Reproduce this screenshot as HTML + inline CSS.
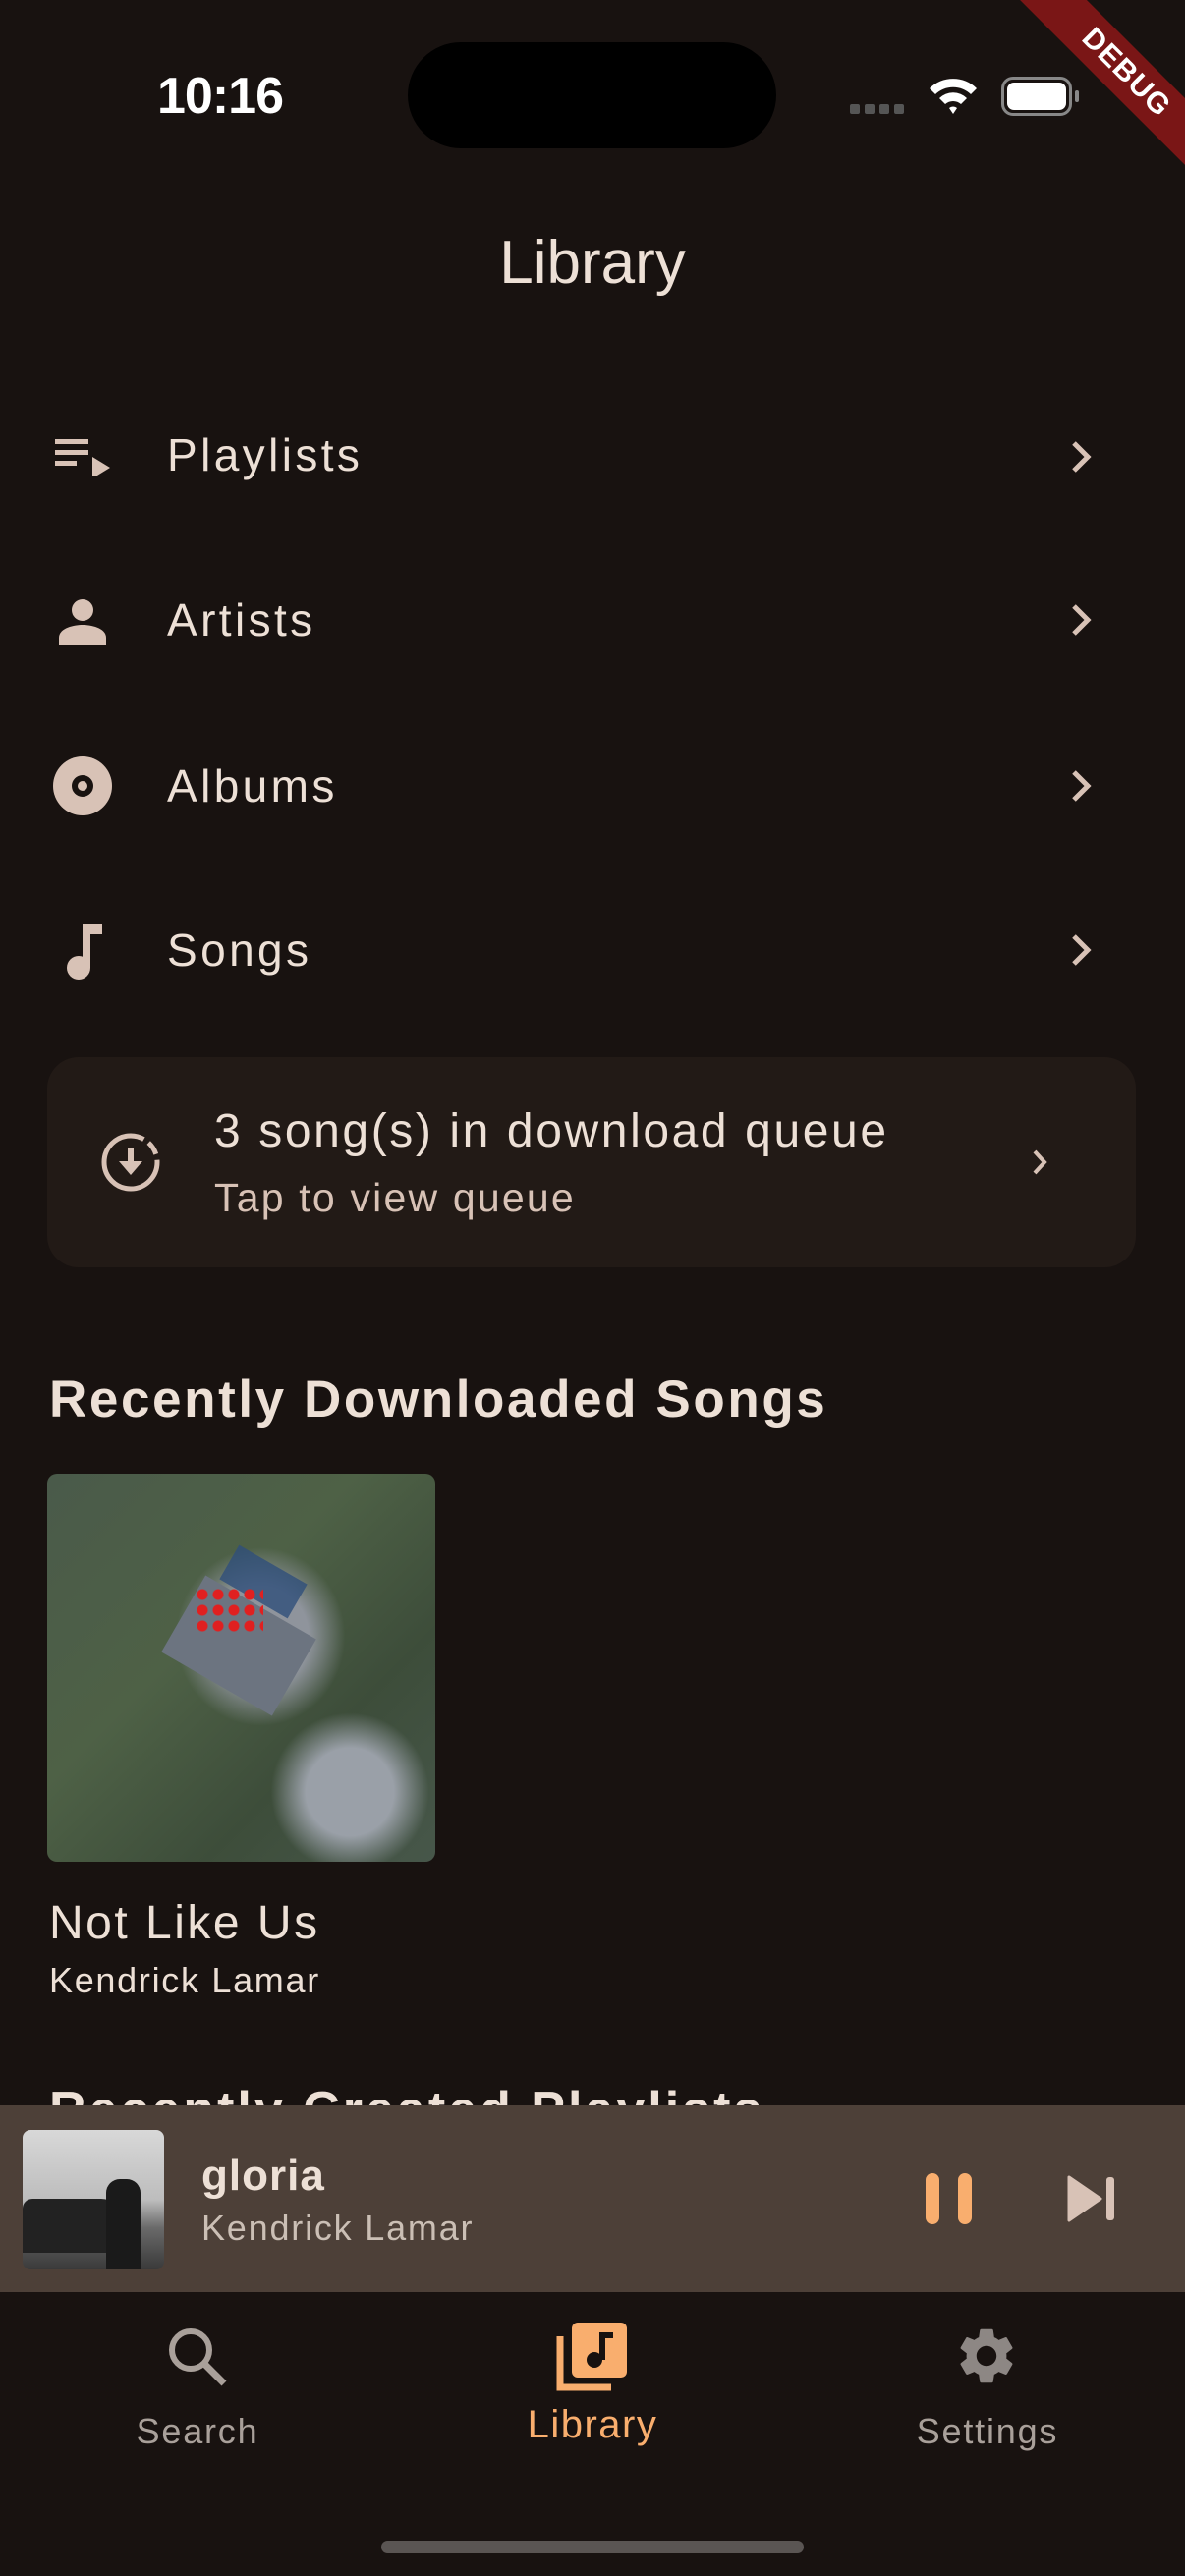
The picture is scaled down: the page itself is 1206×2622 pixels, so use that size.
<!DOCTYPE html>
<html><head><meta charset="utf-8"><style>
*{margin:0;padding:0;box-sizing:border-box}
body{width:1206px;height:2622px;background:#181210;font-family:"Liberation Sans",sans-serif;color:#ede0d6;position:relative;overflow:hidden}
.a{position:absolute}
.row{position:absolute;left:0;width:1206px;height:100px}
.row .t{position:absolute;left:170px;font-size:46px;letter-spacing:3.4px;top:50%;transform:translateY(-50%)}
.row svg{position:absolute}
</style></head><body>
<div class="a" style="left:160px;top:68px;font-size:52px;font-weight:bold;color:#fff;letter-spacing:-1px">10:16</div>
<div class="a" style="left:415px;top:43px;width:375px;height:108px;background:#000;border-radius:54px"></div>
<div class="a" style="left:865px;top:106px;width:58px;height:10px;display:flex;gap:5px"><i style="width:10px;height:10px;background:#555;border-radius:2px"></i><i style="width:10px;height:10px;background:#555;border-radius:2px"></i><i style="width:10px;height:10px;background:#555;border-radius:2px"></i><i style="width:10px;height:10px;background:#555;border-radius:2px"></i></div>
<svg class="a" style="left:944px;top:76px" width="52" height="44" viewBox="0 0 52 44"><path d="M2 14 A34 34 0 0 1 50 14 L44 20 A26 26 0 0 0 8 20Z M12 24 A20 20 0 0 1 40 24 L34 30 A12 12 0 0 0 18 30Z M22 34 A6 6 0 0 1 30 34 L26 40Z" fill="#fff"/></svg>
<div class="a" style="left:1019px;top:78px;width:72px;height:40px;border:3px solid #888;border-radius:12px;padding:3px"><div style="width:100%;height:100%;background:#fff;border-radius:7px"></div></div>
<div class="a" style="left:1094px;top:92px;width:4px;height:12px;background:#888;border-radius:2px"></div>
<div class="a" style="left:976px;top:50px;width:340px;height:48px;background:#7a1616;transform:rotate(45deg);transform-origin:center;color:#fff;font-weight:bold;font-size:30px;text-align:center;line-height:48px;letter-spacing:1px">DEBUG</div>

<div class="a" style="left:0;width:1206px;top:232px;text-align:center;font-size:62px">Library</div>

<div class="row" style="top:413px"><svg style="left:54px;top:32px" width="60" height="40" viewBox="0 0 60 40"><rect x="2" y="2" width="34" height="5" fill="#d8c2b6"/><rect x="2" y="13" width="34" height="5" fill="#d8c2b6"/><rect x="2" y="24" width="22" height="5" fill="#d8c2b6"/><path d="M40 20 L58 31 L40 42Z" fill="#d8c2b6"/></svg><div class="t">Playlists</div><svg style="left:1085px;top:32px" width="30" height="40" viewBox="0 0 30 40"><path d="M8 6 L22 20 L8 34" stroke="#d8c2b6" stroke-width="5" fill="none"/></svg></div>
<div class="row" style="top:581px"><svg style="left:58px;top:26px" width="52" height="52" viewBox="0 0 52 52"><circle cx="26" cy="14" r="11" fill="#d8c2b6"/><path d="M2 50 V42 C2 32 18 29 26 29 C34 29 50 32 50 42 V50Z" fill="#d8c2b6"/></svg><div class="t">Artists</div><svg style="left:1085px;top:30px" width="30" height="40" viewBox="0 0 30 40"><path d="M8 6 L22 20 L8 34" stroke="#d8c2b6" stroke-width="5" fill="none"/></svg></div>
<div class="row" style="top:750px"><svg style="left:54px;top:20px" width="60" height="60" viewBox="0 0 60 60"><circle cx="30" cy="30" r="30" fill="#d8c2b6"/><circle cx="30" cy="30" r="11" fill="#181210"/><circle cx="30" cy="30" r="5" fill="#d8c2b6"/></svg><div class="t">Albums</div><svg style="left:1085px;top:30px" width="30" height="40" viewBox="0 0 30 40"><path d="M8 6 L22 20 L8 34" stroke="#d8c2b6" stroke-width="5" fill="none"/></svg></div>
<div class="row" style="top:917px"><svg style="left:62px;top:22px" width="44" height="60" viewBox="0 0 44 60"><rect x="22" y="2" width="8" height="44" fill="#d8c2b6"/><rect x="22" y="2" width="20" height="10" fill="#d8c2b6"/><circle cx="18" cy="46" r="12" fill="#d8c2b6"/></svg><div class="t">Songs</div><svg style="left:1085px;top:30px" width="30" height="40" viewBox="0 0 30 40"><path d="M8 6 L22 20 L8 34" stroke="#d8c2b6" stroke-width="5" fill="none"/></svg></div>

<div class="a" style="left:48px;top:1076px;width:1108px;height:214px;background:#221a16;border-radius:32px"></div>
<svg class="a" style="left:102px;top:1152px" width="62" height="62" viewBox="0 0 62 62"><path d="M31 4 A27 27 0 0 1 58 31" stroke="#d8c2b6" stroke-width="5" fill="none" stroke-dasharray="14 6"/><path d="M58 31 A27 27 0 1 1 31 4" stroke="#d8c2b6" stroke-width="5" fill="none"/><rect x="28" y="16" width="6" height="18" fill="#d8c2b6"/><path d="M19 30 L43 30 L31 44Z" fill="#d8c2b6"/></svg>
<div class="a" style="left:218px;top:1124px;font-size:48px;letter-spacing:2.6px">3 song(s) in download queue</div>
<div class="a" style="left:218px;top:1196px;font-size:41px;letter-spacing:2.2px;color:#d8c2b6">Tap to view queue</div>
<svg class="a" style="left:1046px;top:1167px" width="24" height="32" viewBox="0 0 24 32"><path d="M7 5 L17 16 L7 27" stroke="#d8c2b6" stroke-width="4" fill="none"/></svg>

<div class="a" style="left:50px;top:1394px;font-size:53px;font-weight:bold;letter-spacing:2.6px">Recently Downloaded Songs</div>
<div class="a" style="left:48px;top:1500px;width:395px;height:395px;border-radius:10px;overflow:hidden;background:radial-gradient(ellipse at 55% 42%,#8f949c 0 16%,transparent 28%),radial-gradient(circle at 78% 82%,#9aa0a8 0 10%,transparent 18%),linear-gradient(135deg,#4a5a4a,#4e6146 40%,#3d4d3a 70%,#47574a)">
<div class="a" style="left:130px;top:130px;width:130px;height:90px;background:#6c7480;transform:rotate(30deg)"></div>
<div class="a" style="left:180px;top:90px;width:80px;height:40px;background:#2f4f7a;opacity:.8;transform:rotate(30deg)"></div>
<div class="a" style="left:150px;top:115px;width:70px;height:50px;"><div style="width:100%;height:100%;background:radial-gradient(circle,#e02020 0 5px,transparent 6px) 0 0/16px 16px"></div></div>
</div>
<div class="a" style="left:50px;top:1930px;font-size:48px;letter-spacing:2.5px">Not Like Us</div>
<div class="a" style="left:50px;top:1995px;font-size:36px;letter-spacing:1.7px">Kendrick Lamar</div>
<div class="a" style="left:50px;top:2118px;font-size:52px;font-weight:bold;letter-spacing:3px">Recently Created Playlists</div>

<div class="a" style="left:0;top:2143px;width:1206px;height:190px;background:#4d4038"></div>
<div class="a" style="left:23px;top:2168px;width:144px;height:142px;border-radius:8px;overflow:hidden;background:linear-gradient(180deg,#d8d8d8 0%,#bdbdbd 50%,#6a6a6a 70%,#3a3a3a 100%)"><div class="a" style="left:0;top:70px;width:100px;height:55px;background:#222;border-radius:10px 20px 0 0"></div><div class="a" style="left:85px;top:50px;width:35px;height:92px;background:#1a1a1a;border-radius:14px 14px 0 0"></div></div>
<div class="a" style="left:205px;top:2190px;font-size:44px;font-weight:bold;letter-spacing:1px">gloria</div>
<div class="a" style="left:205px;top:2247px;font-size:36px;letter-spacing:1.8px;color:#cbbfb5">Kendrick Lamar</div>
<div class="a" style="left:942px;top:2212px;width:14px;height:52px;background:#f9ae6e;border-radius:7px"></div>
<div class="a" style="left:975px;top:2212px;width:14px;height:52px;background:#f9ae6e;border-radius:7px"></div>
<svg class="a" style="left:1086px;top:2214px" width="52" height="48" viewBox="0 0 52 48"><path d="M2 2 L34 24 L2 46Z" fill="#d8c2b6" stroke="#d8c2b6" stroke-width="3" stroke-linejoin="round"/><rect x="40" y="2" width="8" height="44" rx="3" fill="#d8c2b6"/></svg>

<svg class="a" style="left:168px;top:2366px" width="66" height="66" viewBox="0 0 66 66"><circle cx="26" cy="26" r="19" stroke="#a9a09a" stroke-width="6" fill="none"/><path d="M40 40 L60 60" stroke="#a9a09a" stroke-width="7"/></svg>
<div class="a" style="left:0;width:402px;top:2454px;text-align:center;font-size:36px;letter-spacing:1.8px;color:#a9a09a">Search</div>
<svg class="a" style="left:566px;top:2360px" width="74" height="74" viewBox="0 0 74 74"><path d="M4 18 V70 H56" stroke="#f9ae6e" stroke-width="7" fill="none"/><rect x="16" y="4" width="56" height="56" rx="6" fill="#f9ae6e"/><rect x="44" y="14" width="6" height="28" fill="#181210"/><rect x="44" y="14" width="14" height="6" fill="#181210"/><circle cx="39" cy="42" r="8" fill="#181210"/></svg>
<div class="a" style="left:402px;width:402px;top:2446px;text-align:center;font-size:40px;letter-spacing:1.5px;color:#f9ae6e">Library</div>
<svg class="a" style="left:970px;top:2364px" width="68" height="68" viewBox="0 0 24 24"><path fill="#8d8784" d="M19.14 12.94c.04-.3.06-.61.06-.94 0-.32-.02-.64-.07-.94l2.030-1.58a.49.49 0 0 0 .12-.61l-1.92-3.32a.488.488 0 0 0-.59-.22l-2.39.96c-.5-.38-1.03-.7-1.62-.94l-.36-2.54a.484.484 0 0 0-.48-.41h-3.84c-.24 0-.43.17-.47.41l-.36 2.54c-.59.24-1.130.57-1.62.94l-2.39-.96c-.22-.08-.47 0-.59.22L2.74 8.87c-.12.21-.08.47.12.61l2.03 1.58c-.05.3-.09.63-.09.94s.02.64.07.94l-2.030 1.58a.49.49 0 0 0-.12.61l1.92 3.32c.12.22.37.29.59.22l2.39-.96c.5.38 1.03.7 1.62.94l.36 2.54c.05.24.24.41.48.41h3.84c.24 0 .44-.17.47-.41l.36-2.54c.59-.24 1.13-.56 1.62-.94l2.39.96c.22.08.47 0 .59-.22l1.92-3.32c.12-.22.07-.47-.12-.61l-2.01-1.58zM12 15.6c-1.98 0-3.6-1.62-3.6-3.6s1.62-3.6 3.6-3.6 3.6 1.62 3.6 3.6-1.62 3.6-3.6 3.6z"/></svg>
<div class="a" style="left:804px;width:402px;top:2454px;text-align:center;font-size:36px;letter-spacing:1.8px;color:#a9a09a">Settings</div>
<div class="a" style="left:388px;top:2586px;width:430px;height:13px;background:#5a5553;border-radius:7px"></div>
</body></html>
